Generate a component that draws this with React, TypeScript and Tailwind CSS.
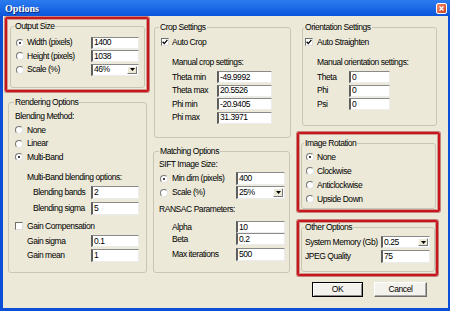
import type { ReactNode } from 'react'

const txt = "font-['Liberation_Sans',Arial,sans-serif] text-[8.5px] leading-[11px] tracking-[-0.45px] whitespace-nowrap text-black"

function Radio({ checked }: { checked?: boolean }) {
  return (
    <span className="relative inline-block w-[8px] h-[8px] shrink-0 rounded-full bg-white border border-t-[#777] border-l-[#777] border-r-[#e4e4e4] border-b-[#e4e4e4]">
      {checked && <span className="absolute left-[2px] top-[2px] w-[2px] h-[2px] rounded-full bg-black" />}
    </span>
  )
}

function Check({ checked }: { checked?: boolean }) {
  return (
    <span className="relative inline-block w-[8px] h-[8px] shrink-0 bg-white border border-t-[#6f6f6f] border-l-[#6f6f6f] border-r-[#dcdcdc] border-b-[#dcdcdc]">
      {checked && (
        <svg className="absolute left-0 top-0" width="6" height="6" viewBox="0 0 6 6">
          <path d="M0.6 2.8 L2.3 4.6 L5.4 0.9" fill="none" stroke="#000" strokeWidth="1.3" />
        </svg>
      )}
    </span>
  )
}

function Field({ value, w, h = 'h-[12px]' }: { value: string; w: string; h?: string }) {
  return (
    <div className={`${w} ${h} shrink-0 bg-white border-l-2 border-t border-r border-b border-l-[#5e5e5e] border-t-[#8a8a8a] border-r-[#ececec] border-b-[#ececec] pl-[1px] flex items-center`}>
      {value}
    </div>
  )
}

function Drop({ value, w, h = 'h-[12px]' }: { value: string; w: string; h?: string }) {
  return (
    <div className={`${w} ${h} shrink-0 bg-white border-l-2 border-t border-r border-b border-l-[#5e5e5e] border-t-[#8a8a8a] border-r-[#ececec] border-b-[#ececec] flex items-stretch`}>
      <span className="flex-1 pl-[1px] flex items-center">{value}</span>
      <span className="w-[10px] my-[1px] mr-[1px] bg-[#ECE9D8] border border-t-white border-l-white border-r-[#777] border-b-[#777] flex items-center justify-center">
        <svg width="5" height="3" viewBox="0 0 5 3">
          <path d="M0 0 H5 L2.5 3 Z" fill="#000" />
        </svg>
      </span>
    </div>
  )
}

function Group({ label, className, legendClass, children }: { label: string; className: string; legendClass: string; children: ReactNode }) {
  return (
    <fieldset className={`border border-[#c9c6b6] rounded-[3px] ${className}`}>
      <legend className={`px-[1px] ${legendClass}`}>{label}</legend>
      {children}
    </fieldset>
  )
}

function RedBox({ className, children }: { className: string; children: ReactNode }) {
  return (
    <div className={`border-2 border-[#c9161d] rounded-[2px] shadow-[0_0_0_1px_#a3262a88,inset_0_0_0_1px_#a3262a66] ${className}`}>{children}</div>
  )
}

export default function App() {
  return (
    <div className={`w-[450px] h-[311px] bg-[#0a4fd6] flex flex-col overflow-hidden ${txt}`}>
      {/* title bar */}
      <div className="h-[16px] shrink-0 flex items-center justify-between bg-gradient-to-b from-[#2c7cf0] to-[#0a56dc] pl-[5px] pr-[3px]">
        <span className="font-['Liberation_Serif',serif] font-bold text-[10px] tracking-normal text-white [text-shadow:1px_1px_0_#0a2a80]">Options</span>
        <span className="w-[11px] h-[11px] rounded-[2px] bg-gradient-to-br from-[#f08a6a] to-[#c9401c] border border-white flex items-center justify-center">
          <svg width="5" height="5" viewBox="0 0 5 5">
            <path d="M0.5 0.5 L4.5 4.5 M4.5 0.5 L0.5 4.5" stroke="#fff" strokeWidth="1.3" />
          </svg>
        </span>
      </div>

      {/* body */}
      <div className="flex-1 ml-[3px] mr-[2px] mb-[3px] bg-[#ECE9D8] flex">
        {/* left column */}
        <div className="ml-[2px] w-[144px] flex flex-col">
          <RedBox className="mt-[1px] h-[75px]">
            <Group label="Output Size" className="ml-[3px] mt-[2px] w-[135px] h-[67px]" legendClass="ml-[3px]">
              <div className="pl-[5px] pt-[4.5px] flex flex-col gap-[1.5px]">
                <div className="h-[12px] flex items-center">
                  <span className="w-[75px] flex items-center gap-[3px]"><Radio checked />Width (pixels)</span>
                  <Field value="1400" w="w-[48px]" />
                </div>
                <div className="h-[12px] flex items-center">
                  <span className="w-[75px] flex items-center gap-[3px]"><Radio />Height (pixels)</span>
                  <Field value="1038" w="w-[48px]" />
                </div>
                <div className="h-[12px] flex items-center">
                  <span className="w-[75px] flex items-center gap-[3px]"><Radio />Scale (%)</span>
                  <Drop value="46%" w="w-[48px]" />
                </div>
              </div>
            </Group>
          </RedBox>

          <Group label="Rendering Options" className="ml-[3px] mt-[5px] w-[139px] h-[176px]" legendClass="ml-[5px]">
            <div className="pl-[6px] flex flex-col">
              <div className="mt-[2.5px]">Blending Method:</div>
              <div className="mt-[3px] flex flex-col gap-[2.5px]">
                <div className="h-[11px] flex items-center gap-[4px]"><Radio />None</div>
                <div className="h-[11px] flex items-center gap-[4px]"><Radio />Linear</div>
                <div className="h-[11px] flex items-center gap-[4px]"><Radio checked />Multi-Band</div>
              </div>
              <div className="mt-[9px] pl-[12px]">Multi-Band blending options:</div>
              <div className="mt-[3.5px] pl-[18px] flex flex-col gap-[3px]">
                <div className="flex items-center"><span className="w-[58px]">Blending bands</span><Field value="2" w="w-[48px]" h="h-[13px]" /></div>
                <div className="flex items-center"><span className="w-[58px]">Blending sigma</span><Field value="5" w="w-[48px]" h="h-[13px]" /></div>
              </div>
              <div className="mt-[5.5px] h-[11px] flex items-center gap-[4px]"><Check />Gain Compensation</div>
              <div className="mt-[3.5px] pl-[12px] flex flex-col gap-[2px]">
                <div className="flex items-center"><span className="w-[64px]">Gain sigma</span><Field value="0.1" w="w-[48px]" /></div>
                <div className="flex items-center"><span className="w-[64px]">Gain mean</span><Field value="1" w="w-[48px]" h="h-[13px]" /></div>
              </div>
            </div>
          </Group>
        </div>

        {/* middle column */}
        <div className="ml-[4px] w-[139px] flex flex-col">
          <Group label="Crop Settings" className="ml-[1px] mt-[5.5px] w-[137px] h-[116.5px]" legendClass="ml-[4px]">
            <div className="pl-[6px] flex flex-col">
              <div className="mt-[4px] h-[11px] flex items-center gap-[3px]"><Check checked />Auto Crop</div>
              <div className="mt-[9px] pl-[11px]">Manual crop settings:</div>
              <div className="mt-[3.5px] pl-[11px] flex flex-col gap-[1.5px]">
                <div className="flex items-center"><span className="w-[45px]">Theta min</span><Field value="-49.9992" w="w-[55px]" /></div>
                <div className="flex items-center"><span className="w-[45px]">Theta max</span><Field value="20.5526" w="w-[55px]" /></div>
                <div className="flex items-center"><span className="w-[45px]">Phi min</span><Field value="-20.9405" w="w-[55px]" /></div>
                <div className="flex items-center"><span className="w-[45px]">Phi max</span><Field value="31.3971" w="w-[55px]" /></div>
              </div>
            </div>
          </Group>

          <Group label="Matching Options" className="mt-[7.5px] w-[137px] h-[127.5px]" legendClass="ml-[5px]">
            <div className="pl-[5px] flex flex-col">
              <div className="mt-[2px]">SIFT Image Size:</div>
              <div className="mt-[2.5px] pl-[1px] flex flex-col gap-[1px]">
                <div className="flex items-center">
                  <span className="w-[76px] flex items-center gap-[4px]"><Radio checked />Min dim (pixels)</span>
                  <Field value="400" w="w-[49px]" h="h-[13px]" />
                </div>
                <div className="flex items-center">
                  <span className="w-[76px] flex items-center gap-[4px]"><Radio />Scale (%)</span>
                  <Drop value="25%" w="w-[49px]" h="h-[13px]" />
                </div>
              </div>
              <div className="mt-[4.5px]">RANSAC Parameters:</div>
              <div className="mt-[6.5px] pl-[13px] flex flex-col">
                <div className="flex items-center"><span className="w-[64px]">Alpha</span><Field value="10" w="w-[49px]" /></div>
                <div className="flex items-center"><span className="w-[64px]">Beta</span><Field value="0.2" w="w-[49px]" /></div>
                <div className="mt-[3px] flex items-center"><span className="w-[64px]">Max iterations</span><Field value="500" w="w-[49px]" h="h-[13px]" /></div>
              </div>
            </div>
          </Group>
        </div>

        {/* right column */}
        <div className="ml-[5px] w-[144px] flex flex-col">
          <Group label="Orientation Settings" className="ml-[5px] mt-[5.5px] w-[135px] h-[104.5px]" legendClass="ml-[1px]">
            <div className="pl-[2px] flex flex-col">
              <div className="mt-[4px] h-[11px] flex items-center gap-[4px]"><Check checked />Auto Straighten</div>
              <div className="mt-[9px] pl-[12px]">Manual orientation settings:</div>
              <div className="mt-[3.5px] pl-[12px] flex flex-col gap-[1.5px]">
                <div className="flex items-center"><span className="w-[32px]">Theta</span><Field value="0" w="w-[41px]" /></div>
                <div className="flex items-center"><span className="w-[32px]">Phi</span><Field value="0" w="w-[41px]" /></div>
                <div className="flex items-center"><span className="w-[32px]">Psi</span><Field value="0" w="w-[41px]" /></div>
              </div>
            </div>
          </Group>

          <RedBox className="mt-[6px] w-[143px] h-[80px]">
            <Group label="Image Rotation" className="ml-[2px] mt-[3.5px] w-[135px] h-[71.5px]" legendClass="ml-[2px]">
              <div className="pl-[4px] mt-[3px] flex flex-col gap-[3px]">
                <div className="h-[11px] flex items-center gap-[3px]"><Radio checked />None</div>
                <div className="h-[11px] flex items-center gap-[3px]"><Radio />Clockwise</div>
                <div className="h-[11px] flex items-center gap-[3px]"><Radio />Anticlockwise</div>
                <div className="h-[11px] flex items-center gap-[3px]"><Radio />Upside Down</div>
              </div>
            </Group>
          </RedBox>

          <RedBox className="mt-[8px] w-[141px] h-[56px]">
            <Group label="Other Options" className="ml-[2px] w-[134px] h-[50px]" legendClass="ml-[2px]">
              <div className="pl-[3px] mt-[3px] flex flex-col gap-[2px]">
                <div className="flex items-center"><span className="w-[76px]">System Memory (Gb)</span><Drop value="0.25" w="w-[49px]" /></div>
                <div className="flex items-center"><span className="w-[76px]">JPEG Quality</span><Field value="75" w="w-[49px]" h="h-[13px]" /></div>
              </div>
            </Group>
          </RedBox>

          <div className="mt-[6px] ml-[15px] flex gap-[11px]">
            <button className="w-[51px] h-[15px] border border-black bg-[#f3f2ec] shadow-[inset_1px_1px_0_#fff,inset_-1px_-1px_0_#8d8d8d] flex items-center justify-center">OK</button>
            <button className="w-[53px] h-[15px] bg-[#f3f2ec] border border-t-white border-l-white border-r-[#6d6d6d] border-b-[#6d6d6d] shadow-[inset_-1px_-1px_0_#a9a9a9] flex items-center justify-center">Cancel</button>
          </div>
        </div>
      </div>
    </div>
  )
}
